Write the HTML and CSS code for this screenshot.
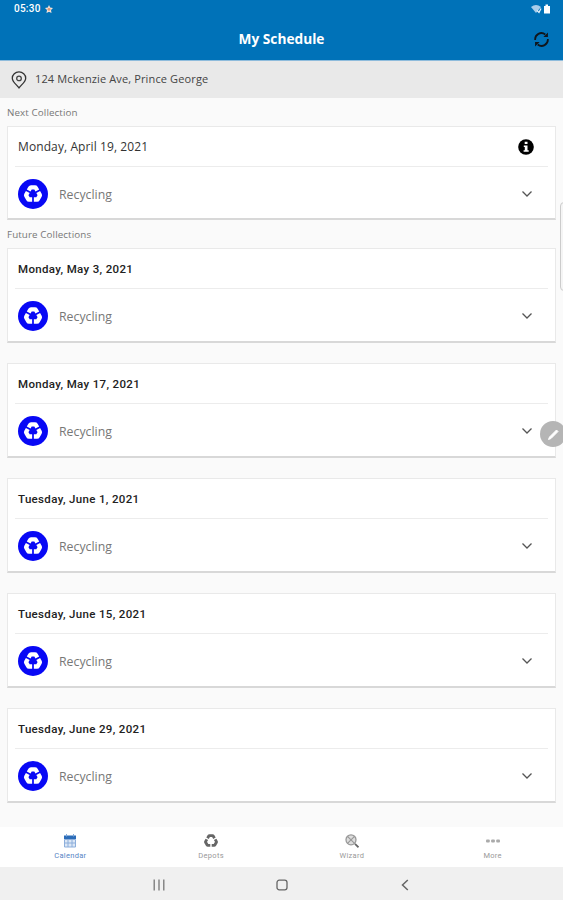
FILE: index.html
```html
<!DOCTYPE html>
<html lang="en">
<head>
<meta charset="utf-8">
<title>My Schedule</title>
<link rel="stylesheet" href="styles.css">
</head>
<body>
<svg class="defs" aria-hidden="true">
  <defs>
    <path id="arm" d="M-5.2-4.200-3.300-7.500Q-3-8-2.400-8H2.400Q3-8 3.300-7.500L5.200-4.200" fill="none"/>
    <symbol id="recycle" viewBox="-12 -12 24 24">
      <use href="#arm"/><use href="#arm" transform="rotate(120)"/><use href="#arm" transform="rotate(240)"/>
    </symbol>
    <symbol id="chevron" viewBox="0 0 12 8"><path d="M1.500 1.500 6 6l4.500-4.500" fill="none" stroke="#555" stroke-width="1.300"/></symbol>
  </defs>
</svg>
<header class="top">
  <div class="status">
    <span class="clock">05:30</span>
    <svg class="star" viewBox="0 0 8 8"><path d="M4 0 5.200 2.500 8 3 6 5 6.500 8 4 6.700 1.500 8 2 5 0 3 2.800 2.500Z" fill="#f6e3d8"/><circle cx="4" cy="4.200" r="1.500" fill="#e39a78"/></svg>
    <svg class="signal" viewBox="0 0 20 10"><path d="M0 3Q5-1 10 3L5 9Z" fill="#a9cdea"/><path d="M6 6.500 8 8.500 10 4.500" stroke="#e4f1fb" stroke-width="1.300" fill="none"/><path d="M13 2h1.500V.5h2.500V2H19v7.500h-6Z" fill="#fff"/></svg>
  </div>
  <div class="titlebar">
    <h1>My Schedule</h1>
    <svg class="refresh" viewBox="0 0 18 18"><g fill="none" stroke="#10161c" stroke-width="1.900"><path d="M2.300 9.500A6.600 6.600 0 0 1 13 3.700"/><path d="M15.700 8.500A6.600 6.600 0 0 1 5 14.300"/></g><path d="M15.800 1.500V6.300H11ZM2.200 16.500V11.700H7Z" fill="#10161c"/></svg>
  </div>
</header>
<div class="address">
  <svg class="pin" viewBox="0 0 16 18"><path d="M8 16.800C5.500 13.500 1.300 11 1.300 7.200A6.700 6.300 0 0 1 14.700 7.200C14.700 11 10.500 13.500 8 16.800Z" fill="none" stroke="#333" stroke-width="1.300"/><circle cx="8" cy="7.400" r="2.300" fill="none" stroke="#444" stroke-width="1.300"/></svg>
  <span>124 Mckenzie Ave, Prince George</span>
</div>
<main>
  <h2>Next Collection</h2>
  <section class="card next">
    <div class="date"><span>Monday, April 19, 2021</span>
      <svg class="info" viewBox="0 0 16 16"><circle cx="8" cy="8" r="7.800" fill="#000"/><path d="M6.700 2.800h2.800v2.300H6.700ZM5.800 6.400h3.700v4.800h1.200v1.600H5.600v-1.600h1.200V8h-1Z" fill="#fff"/></svg>
    </div>
    <div class="item"><span class="badge"><svg><use href="#recycle"/></svg></span><span class="kind">Recycling</span><svg class="chev"><use href="#chevron"/></svg></div>
  </section>
  <h2>Future Collections</h2>
  <section class="card">
    <div class="date"><span>Monday, May 3, 2021</span></div>
    <div class="item"><span class="badge"><svg><use href="#recycle"/></svg></span><span class="kind">Recycling</span><svg class="chev"><use href="#chevron"/></svg></div>
  </section>
  <section class="card">
    <div class="date"><span>Monday, May 17, 2021</span></div>
    <div class="item"><span class="badge"><svg><use href="#recycle"/></svg></span><span class="kind">Recycling</span><svg class="chev"><use href="#chevron"/></svg></div>
  </section>
  <section class="card">
    <div class="date"><span>Tuesday, June 1, 2021</span></div>
    <div class="item"><span class="badge"><svg><use href="#recycle"/></svg></span><span class="kind">Recycling</span><svg class="chev"><use href="#chevron"/></svg></div>
  </section>
  <section class="card">
    <div class="date"><span>Tuesday, June 15, 2021</span></div>
    <div class="item"><span class="badge"><svg><use href="#recycle"/></svg></span><span class="kind">Recycling</span><svg class="chev"><use href="#chevron"/></svg></div>
  </section>
  <section class="card">
    <div class="date"><span>Tuesday, June 29, 2021</span></div>
    <div class="item"><span class="badge"><svg><use href="#recycle"/></svg></span><span class="kind">Recycling</span><svg class="chev"><use href="#chevron"/></svg></div>
  </section>
</main>
<nav class="tabs">
  <div class="tab active"><svg viewBox="0 0 14 14"><path d="M1 1.500h12v3.500H1Z" fill="#2b6cb8"/><path d="M3.500 0v2.500M10.500 0v2.500" stroke="#7ea8da"/><path d="M1.500 5.500h11v7.500h-11ZM1.500 9h11M5 6v7M9 6v7" fill="#dce7f5" stroke="#8caedb"/></svg><span>Calendar</span></div>
  <div class="tab"><svg class="depot"><use href="#recycle"/></svg><span>Depots</span></div>
  <div class="tab"><svg viewBox="0 0 14 14"><circle cx="6" cy="5.800" r="5" fill="#ddd" stroke="#999" stroke-width="1.300"/><path d="M2.500 2.300 9.500 9.300M9.500 2.300 2.500 9.300" stroke="#999" stroke-width="1.200"/><path d="M10 9.800 13.500 13.300" stroke="#666" stroke-width="1.700"/></svg><span>Wizard</span></div>
  <div class="tab"><svg viewBox="0 0 14 14"><g fill="#aaa"><rect y="5.500" width="3.800" height="3" rx="1"/><rect x="5.100" y="5.500" width="3.800" height="3" rx="1"/><rect x="10.200" y="5.500" width="3.800" height="3" rx="1"/></g></svg><span>More</span></div>
</nav>
<div class="sysnav">
  <svg viewBox="0 0 12 12"><path d="M1.200.5v11M6 .5v11M10.800.5v11" stroke="#777" stroke-width="1.300"/></svg>
  <svg viewBox="0 0 12 12"><rect x="1" y="1.200" width="10" height="9.600" rx="2.300" fill="none" stroke="#666" stroke-width="1.300"/></svg>
  <svg viewBox="0 0 12 12"><path d="M8.800 1 3.500 6l5.300 5" fill="none" stroke="#666" stroke-width="1.500"/></svg>
</div>
<div class="edge-handle"></div>
<div class="pen"><svg viewBox="0 0 26 26"><path d="M8.500 18.500 9.500 16 16.500 9 18 10.500 11 17.500Z" fill="#fff" stroke="#fff"/></svg></div>
</body>
</html>
```

FILE: styles.css
```css
* { box-sizing: border-box; }
body {
  margin: 0;
  width: 563px;
  height: 900px;
  display: flex;
  flex-direction: column;
  position: relative;
  overflow: hidden;
  background: #fafafa;
  font-family: "Open Sans", sans-serif;
}
svg { display: block; flex: none; }
.defs { position: absolute; width: 0; height: 0; }
h1, h2 { margin: 0; }
.top { height: 61px; flex: none; background: #0072b8; border-bottom: 1px solid #8fbcdc; color: #fff; }
.status { height: 18px; display: flex; align-items: center; padding: 0 12px 0 14px; }
.clock { font: 500 10px/18px Roboto, sans-serif; letter-spacing: .25px; width: 28px; }
.star { width: 8px; height: 8px; margin-left: 3px; }
.signal { width: 20px; height: 10px; margin-left: auto; }
.titlebar { height: 42px; display: grid; grid-template-columns: 40px 1fr 40px; align-items: center; }
h1 { grid-column: 2; text-align: center; font-size: 13.700px; font-weight: 700; line-height: 20px; }
.refresh { width: 17px; height: 17px; margin-left: 10px; }
.address { height: 37px; flex: none; display: flex; align-items: center; gap: 8px; padding: 0 11px; background: #e9e9e9; color: #444; font-size: 11px; letter-spacing: .13px; line-height: 18px; }
.address span { margin-top: -2px; }
.pin { width: 16px; height: 18px; }
main { flex: 1; padding: 0 7px; }
h2 { font-size: 9.800px; font-weight: 400; line-height: 29px; height: 28px; letter-spacing: .1px; color: #777; }
.card { height: 95px; margin-bottom: 20px; background: #fff; border: 1px solid #e9e9e9; border-bottom: 2px solid #d8d8d8; padding: 0 7px; }
.next { margin-bottom: 0; height: 94px; }
.date { height: 40px; display: flex; align-items: center; justify-content: space-between; padding: 1px 14px 0 3px; border-bottom: 1px solid #ececec; font: 500 11.500px/18px Roboto, sans-serif; letter-spacing: .34px; color: #222; }
.next .date { font: 400 12px/18px "Open Sans", sans-serif; letter-spacing: .1px; color: #333; }
.info { width: 16px; height: 16px; }
.item { height: 54px; display: flex; align-items: center; padding: 0 15px 0 3px; }
.badge { width: 30px; height: 30px; border-radius: 50%; background: #0808f5; display: grid; place-items: center; }
.badge svg { width: 20px; height: 20px; stroke: #fff; stroke-width: 5.200; }
.kind { margin: 1px 0 0 11px; font-size: 12.300px; line-height: 18px; color: #777; }
.chev { width: 12px; height: 8px; margin-left: auto; }
.tabs { height: 40px; flex: none; display: grid; grid-template-columns: repeat(4, 1fr); background: #fff; }
.tab { display: flex; flex-direction: column; align-items: center; padding-top: 7px; color: #999; font: 400 7.500px/10px Roboto, sans-serif; letter-spacing: .3px; }
.tab svg { width: 14px; height: 14px; margin-bottom: 3px; }
.tab .depot { width: 16px; height: 16px; margin: -1px 0 2px; stroke: #666; stroke-width: 4.300; }
.active { color: #5585c5; }
.sysnav { height: 33px; flex: none; display: flex; justify-content: center; align-items: center; gap: 111px; padding-top: 2px; background: #f0f0f0; }
.sysnav svg { width: 12px; height: 12px; }
.edge-handle { position: absolute; left: 560px; top: 202px; width: 10px; height: 89px; border: 1px solid #ccc; border-radius: 4px; background: #f5f5f5; }
.pen { position: absolute; left: 540px; top: 421px; width: 26px; height: 26px; border-radius: 50%; background: #b5b5b5; }
```
